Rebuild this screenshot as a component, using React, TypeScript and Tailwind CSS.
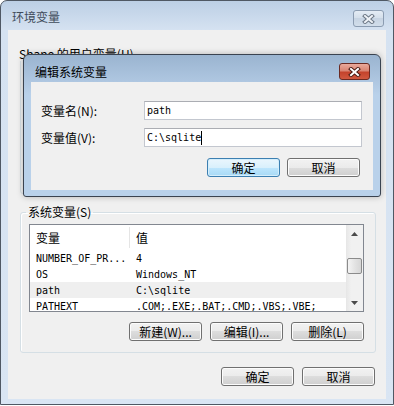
import React from 'react';

function XGlyph({ outline, fill }: { outline: string; fill: string }) {
  return (
    <svg width="13" height="10" viewBox="0 0 13 10">
      <path d="M3 2 L10 8 M10 2 L3 8" stroke={outline} strokeWidth="4" strokeLinecap="square" fill="none" />
      <path d="M3 2 L10 8 M10 2 L3 8" stroke={fill} strokeWidth="2" strokeLinecap="square" fill="none" />
    </svg>
  );
}

function Arrow({ up }: { up?: boolean }) {
  return (
    <svg width="7" height="4" viewBox="0 0 7 4">
      <path d={up ? 'M3.5 0 L7 4 L0 4 Z' : 'M0 0 L7 0 L3.5 4 Z'} fill="#4a4a4a" />
    </svg>
  );
}

function Btn({ children, primary }: { children: React.ReactNode; primary?: boolean }) {
  return (
    <div
      className={
        primary
          ? 'flex h-[19px] w-[73px] items-center justify-center rounded-[3px] border border-[#3c7fb1] bg-[linear-gradient(to_bottom,#eaf6fd_0%,#d9f0fc_50%,#bee6fd_50%,#a7d9f5_100%)] text-[12px] leading-none shadow-[inset_0_0_0_1px_#d4eefc]'
          : 'flex h-[19px] w-[73px] items-center justify-center rounded-[3px] border border-[#707070] bg-[linear-gradient(to_bottom,#f2f2f2_0%,#ebebeb_50%,#dddddd_50%,#cfcfcf_100%)] text-[12px] leading-none shadow-[inset_0_0_0_1px_#fcfcfc]'
      }
    >
      {children}
    </div>
  );
}

const rows = [
  { name: 'NUMBER_OF_PR...', value: '4' },
  { name: 'OS', value: 'Windows_NT' },
  { name: 'path', value: 'C:\\sqlite', hot: true },
  { name: 'PATHEXT', value: '.COM;.EXE;.BAT;.CMD;.VBS;.VBE;' },
];

function EditDialog() {
  return (
    <div className="absolute left-[23px] top-[54px] flex h-[143px] w-[358px] flex-col rounded-t-[6px] rounded-b-[3px] border border-[#3a4350] bg-[linear-gradient(to_bottom,#9ab4d0_0px,#afc7e1_27px,#b9d1ea_40px,#b9d1ea_100%)] shadow-[0_0_6px_rgba(0,0,0,0.25)]">
      <div className="flex h-[27px] shrink-0 items-start justify-between">
        <span className="ml-[11px] mt-[10px] leading-[14px]">编辑系统变量</span>
        <div className="mr-[10px] mt-[8px] flex h-[17px] w-[31px] items-center justify-center rounded-[3px] border border-[#6b2a22] bg-[linear-gradient(to_bottom,#e9a99b_0%,#d98472_45%,#c4432c_55%,#d0583f_100%)]">
          <XGlyph outline="#4a1a12" fill="#ffffff" />
        </div>
      </div>
      <div className="mx-[7px] flex h-[108px] flex-col bg-[#f0f0f0] px-[10px] pt-[19px]">
        <div className="flex h-[19px] items-center">
          <span className="w-[103px] leading-[14px]">变量名(N):</span>
          <div className="flex h-[19px] w-[218px] items-center border border-[#c3c7cf] border-t-[#abadb3] bg-white pl-[2px] [font-family:'DejaVu_Sans_Mono',monospace] text-[10px]">
            path
          </div>
        </div>
        <div className="mt-[8px] flex h-[19px] items-center">
          <span className="w-[103px] leading-[14px]">变量值(V):</span>
          <div className="flex h-[19px] w-[218px] items-center border border-[#c3c7cf] border-t-[#abadb3] bg-white pl-[2px] [font-family:'DejaVu_Sans_Mono',monospace] text-[10px]">
            {'C:\\sqlite'}
            <span className="h-[14px] w-px bg-black" />
          </div>
        </div>
        <div className="mt-[11px] flex justify-end gap-[7px] pr-[3px]">
          <Btn primary>确定</Btn>
          <Btn>取消</Btn>
        </div>
      </div>
    </div>
  );
}

export default function App() {
  return (
    <div className="relative h-[406px] w-[394px] overflow-hidden bg-white text-[12px] text-black [font-family:'Noto_Sans_CJK_SC',sans-serif]">
      <div className="flex h-[405px] w-[394px] flex-col rounded-t-[7px] border border-[#4f5864] bg-[linear-gradient(to_bottom,#bccfe5_0px,#d5e2f1_29px,#d9e5f3_100%)]">
        <div className="flex h-[29px] shrink-0 items-start justify-between">
          <span className="ml-[11px] mt-[9px] leading-[14px] text-[#3f4b5a]">环境变量</span>
          <div className="mr-[9px] mt-[9px] flex h-[17px] w-[31px] items-center justify-center rounded-[3px] border border-[#8b9cb1] bg-[linear-gradient(to_bottom,#e4ecf5_0%,#d3deea_50%,#c7d4e3_50%,#d2deeb_100%)]">
            <XGlyph outline="#6b7785" fill="#eef2f7" />
          </div>
        </div>

        <div className="mx-[7px] flex h-[369px] flex-col bg-[#f0f0f0]">
          {/* 用户变量 (mostly hidden under the dialog) */}
          <fieldset className="ml-[12px] mt-[17px] h-[147px] w-[356px] min-w-0 rounded-[3px] border border-[#d5dfe5]">
            <legend className="-ml-[4px] px-[2px] leading-[14px]">Shane 的用户变量(U)</legend>
          </fieldset>

          {/* 系统变量 */}
          <fieldset className="ml-[12px] mt-[11px] w-[356px] min-w-0 rounded-[3px] border border-[#d5dfe5] pb-[11px] pl-[8px] pr-[11px] shadow-[inset_1px_1px_0_#ffffff]">
            <legend className="-ml-[3px] px-[2px] leading-[14px]">系统变量(S)</legend>
            <div className="mt-[5px] flex h-[88px] w-[335px] overflow-hidden border border-[#828790] bg-white">
              <div className="flex w-[316px] flex-col overflow-hidden">
                <div className="flex h-[23px] shrink-0 items-center pt-[2px]">
                  <div className="flex h-full w-[100px] items-center border-r border-[#e5e5e5] pl-[6px] leading-[14px]">变量</div>
                  <div className="pl-[6px] leading-[14px]">值</div>
                </div>
                <div className="pt-[2px] [font-family:'DejaVu_Sans_Mono',monospace] text-[10px]">
                  {rows.map((r) => (
                    <div key={r.name} className={r.hot ? 'flex h-[16px] items-center bg-[#efefef]' : 'flex h-[16px] items-center'}>
                      <div className="w-[100px] shrink-0 whitespace-nowrap pl-[6px]">{r.name}</div>
                      <div className="whitespace-nowrap pl-[6px]">{r.value}</div>
                    </div>
                  ))}
                </div>
              </div>
              <div className="flex w-[17px] shrink-0 flex-col bg-[linear-gradient(to_right,#e6e6e6,#f1f1f1_30%,#f1f1f1)]">
                <div className="flex h-[17px] items-center justify-center">
                  <Arrow up />
                </div>
                <div className="h-[16px]" />
                <div className="mx-[1px] h-[16px] rounded-[2px] border border-[#8b8b8b] bg-[linear-gradient(to_right,#f4f4f4,#e2e2e2_55%,#d6d6d6)]" />
                <div className="flex-1" />
                <div className="flex h-[17px] items-center justify-center">
                  <Arrow />
                </div>
              </div>
            </div>
            <div className="mt-[10px] flex justify-end gap-[8px]">
              <Btn>新建(W)...</Btn>
              <Btn>编辑(I)...</Btn>
              <Btn>删除(L)</Btn>
            </div>
          </fieldset>

          <div className="mt-[14px] flex justify-end gap-[8px] pr-[11px]">
            <Btn>确定</Btn>
            <Btn>取消</Btn>
          </div>
        </div>
      </div>
      <EditDialog />
    </div>
  );
}
